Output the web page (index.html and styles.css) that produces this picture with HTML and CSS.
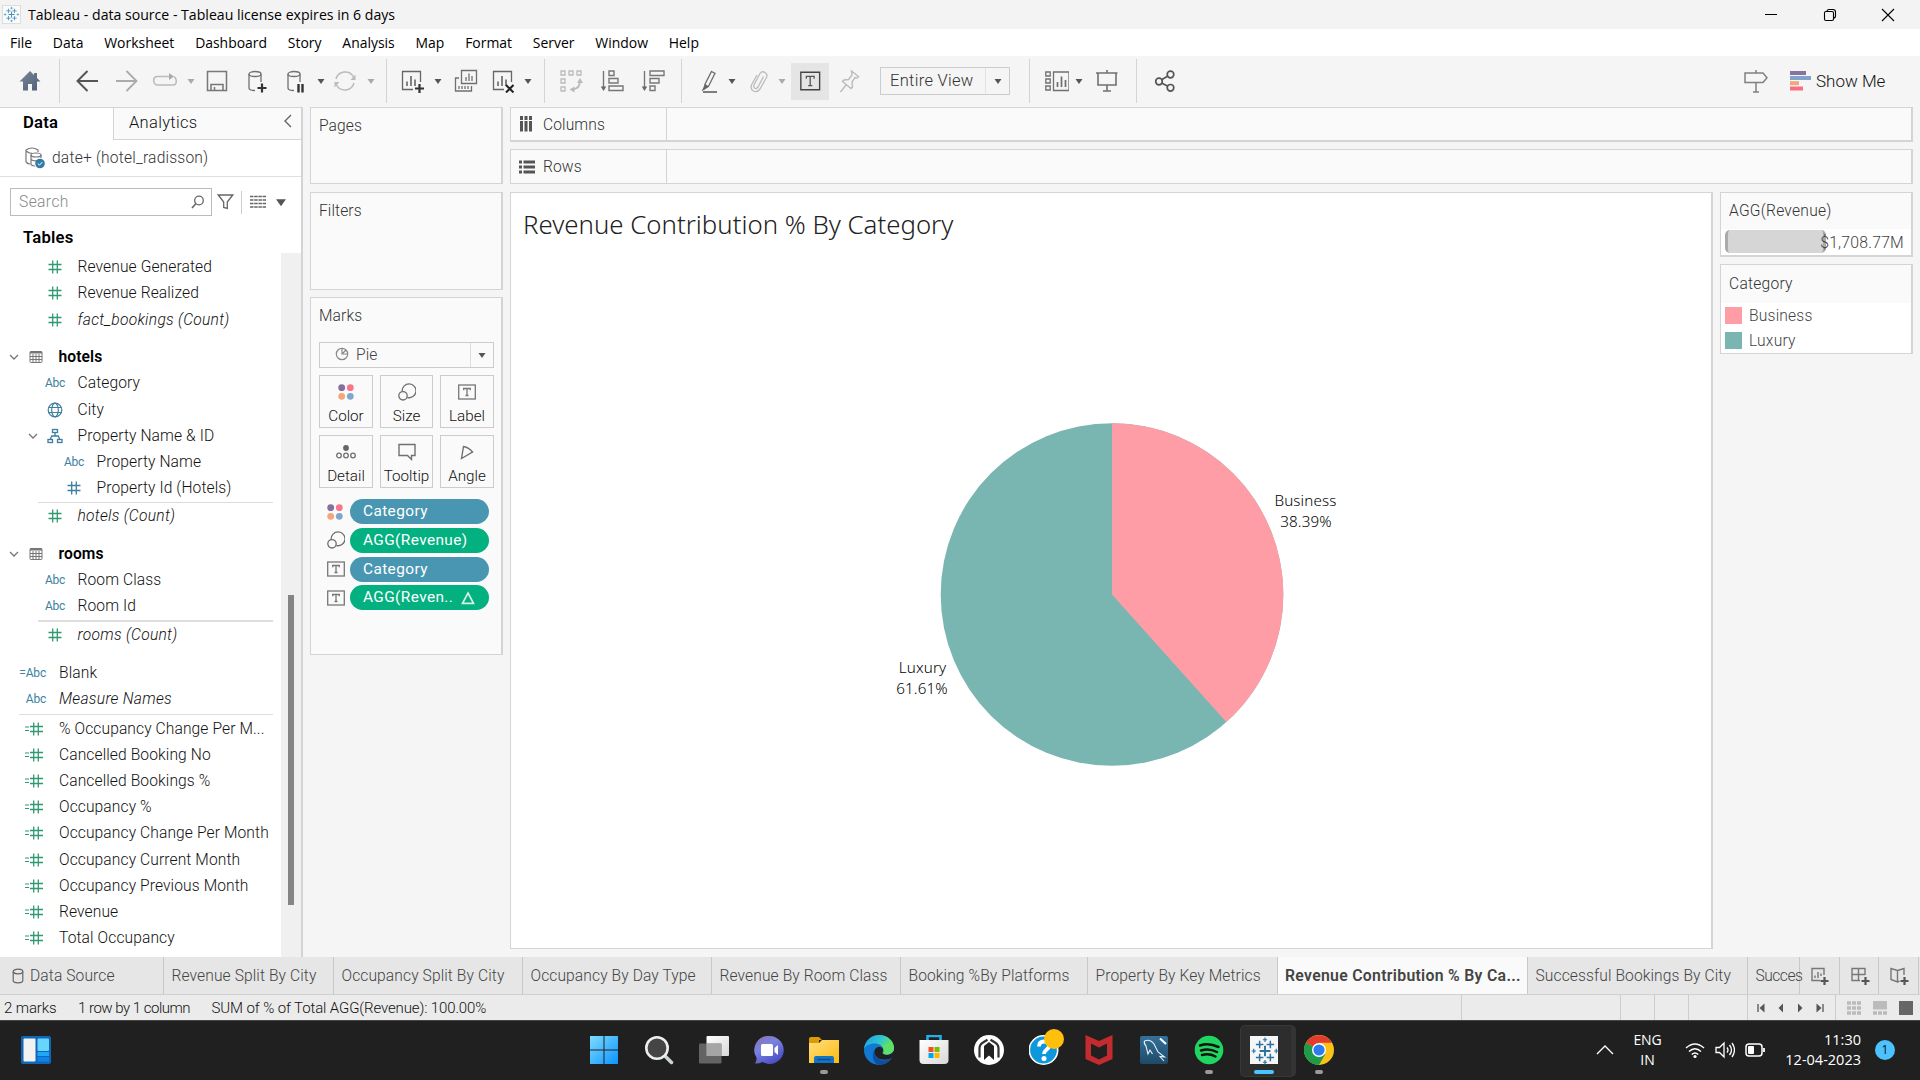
FILE: index.html
```html
<!DOCTYPE html>
<html lang="en">
<head>
<meta charset="utf-8">
<title>Tableau - data source</title>
<link rel="stylesheet" href="styles.css">
</head>
<body>
<svg class="defs" width="0" height="0">
  <defs>
    <linearGradient id="gw" x1="0" y1="0" x2="1" y2="1"><stop offset="0" stop-color="#7fdcff"/><stop offset="1" stop-color="#0a93ff"/></linearGradient>
    <linearGradient id="gf" x1="0" y1="0" x2="1" y2="1"><stop offset="0" stop-color="#ffe07a"/><stop offset="1" stop-color="#fdb913"/></linearGradient>
    <linearGradient id="gc" x1="0" y1="0" x2="0.6" y2="1"><stop offset="0" stop-color="#8a6fae"/><stop offset="0.45" stop-color="#7b83e0"/><stop offset="1" stop-color="#4b4fc4"/></linearGradient>
    <linearGradient id="ge" x1="0" y1="0" x2="1" y2="0.4"><stop offset="0" stop-color="#1f9be0"/><stop offset="0.55" stop-color="#2fc4d4"/><stop offset="1" stop-color="#66eb4e"/></linearGradient>
    <linearGradient id="gh" x1="0" y1="0" x2="1" y2="1"><stop offset="0" stop-color="#7a8797"/><stop offset="1" stop-color="#4f5f78"/></linearGradient>
    <linearGradient id="gm" x1="0" y1="0" x2="0" y2="1"><stop offset="0" stop-color="#34719b"/><stop offset="1" stop-color="#1f4a68"/></linearGradient>
    <linearGradient id="gt" x1="0" y1="0" x2="1" y2="1"><stop offset="0" stop-color="#ffffff"/><stop offset="1" stop-color="#d8d8d8"/></linearGradient>
    <symbol id="caret" viewBox="0 0 10 10"><path d="M1.500 3h7L5 8z" fill="currentColor"/></symbol>
    <symbol id="cross" viewBox="0 0 28 28">
      <path d="M14 9v10M9 14h10" stroke-width="1.8"/>
      <path d="M9 4.500v7M5.500 8h7M19 4.500v7M15.500 8h7M9 16.500v7M5.500 20h7M19 16.500v7M15.500 20h7" stroke-width="1.400"/>
      <path d="M14 1.500v4M12 3.500h4M14 22.500v4M12 24.500h4M3.500 12v4M1.500 14h4M24.500 12v4M22.500 14h4" stroke-width="1.100"/>
    </symbol>
    <symbol id="hash" viewBox="0 0 14 14"><path d="M4.700 .5v13M9.300 .5v13M.5 4.500h13M.5 9.500h13" fill="none" stroke="currentColor" stroke-width="1.300"/></symbol>
    <symbol id="eqhash" viewBox="0 0 18 14"><path d="M8.700 .5v13M13.300 .5v13M5 4.500h13M5 9.500h13" fill="none" stroke="currentColor" stroke-width="1.300"/><path d="M0 5h4M0 8.500h4" stroke="currentColor" stroke-width="1.200"/></symbol>
    <symbol id="globe" viewBox="0 0 16 16"><g fill="none" stroke="currentColor" stroke-width="1.200"><circle cx="8" cy="8" r="6.800"/><ellipse cx="8" cy="8" rx="3.300" ry="6.800"/><path d="M1.800 5.500h12.400M1.800 10.500h12.400"/></g></symbol>
    <symbol id="hier" viewBox="0 0 16 16"><g fill="none" stroke="currentColor" stroke-width="1.300"><rect x="5.500" y="1.500" width="5" height="3"/><rect x="1" y="11.500" width="4.500" height="3"/><rect x="10.500" y="11.500" width="4.500" height="3"/><path d="M8 4.500v3.500M3.200 11.500l1.500-3.500h6.600l1.500 3.500"/></g></symbol>
    <symbol id="table" viewBox="0 0 14 14"><g fill="none" stroke="#777" stroke-width="1"><rect x="1" y="1.500" width="12" height="11" rx="1"/><path d="M1 2.500h12" stroke-width="2"/><path d="M4 4v8.500M7 4v8.500M10 4v8.500M1 6.500h12M1 9.500h12"/></g></symbol>
    <symbol id="chev" viewBox="0 0 10 10"><path d="M1 3l4 4 4-4" fill="none" stroke="#777" stroke-width="1.300"/></symbol>
    <symbol id="dots" viewBox="0 0 16 16"><circle cx="3.700" cy="3.700" r="3.400" fill="#876f9c"/><circle cx="12.300" cy="3.700" r="3.400" fill="#f9768a"/><circle cx="3.700" cy="12.300" r="3.400" fill="#f4a678"/><circle cx="12.300" cy="12.300" r="3.400" fill="#82a5cd"/></symbol>
    <symbol id="size" viewBox="0 0 18 18"><g fill="none" stroke="#707070" stroke-width="1.300"><path d="M4.200 8.500A6.900 6.900 0 1 1 9.300 14.500"/><circle cx="5" cy="12.800" r="4.200"/></g></symbol>
    <symbol id="label" viewBox="0 0 18 16"><rect x=".7" y="1" width="16.600" height="14" fill="none" stroke="#777" stroke-width="1.300"/><path d="M5.700 6.300V4.500h6.600v1.800M9 4.500v7M7.500 11.500h3" fill="none" stroke="#777" stroke-width="1.300"/></symbol>
    <symbol id="db" viewBox="0 0 24 24"><g fill="none" stroke="#707070" stroke-width="1.300"><ellipse cx="10" cy="5" rx="6" ry="2.500"/><path d="M4 5v14c0 1.500 2.500 2.500 6 2.500M16 5v8"/></g></symbol>
    <symbol id="chart" viewBox="0 0 24 24"><g fill="none" stroke="#666" stroke-width="1.300"><path d="M13 20.500H2.500v-18h18V13"/><path d="M7 17v-4.500M11 17V7M15 17V10.500" stroke-width="1.600"/></g></symbol>
  </defs>
</svg>

<header class="titlebar">
  <svg class="app" viewBox="0 0 20 20"><rect x=".5" y=".5" width="18" height="18" fill="#f8fafb" stroke="#ddd"/><svg x="1" y="1" width="17" height="17" stroke="#4a90b8" fill="none"><use href="#cross"/></svg></svg>
  <span class="app-title">Tableau - data source - Tableau license expires in 6 days</span>
  <svg class="wc" viewBox="0 0 14 14"><path d="M1 6.500h12" stroke="#000"/></svg>
  <svg class="wc" viewBox="0 0 14 14"><g fill="none" stroke="#000" stroke-width="1.100"><rect x="1.500" y="3.500" width="9" height="9" rx="1.500"/><path d="M4 3.500C4 2 5 1.500 6 1.500h4C12 1.500 12.500 2.500 12.500 4v4c0 1-.5 2-2 2"/></g></svg>
  <svg class="wc" viewBox="0 0 14 14"><path d="M1 1l12 12M13 1L1 13" stroke="#000" stroke-width="1.100"/></svg>
</header>

<nav class="menubar"><span>File</span><span>Data</span><span>Worksheet</span><span>Dashboard</span><span>Story</span><span>Analysis</span><span>Map</span><span>Format</span><span>Server</span><span>Window</span><span>Help</span></nav>

<div class="toolbar">
  <svg class="ic g18" viewBox="0 0 24 24"><path d="M12 2L1.500 12.500H5V21.500h5v-6.500h4v6.500h5v-9h3.500L19 9V4h-3v2z" fill="url(#gh)"/></svg>
  <i class="sep g17"></i>
  <svg class="ic g15" viewBox="0 0 24 24"><path d="M23 12H3M12.500 2L2.500 12l10 10" fill="none" stroke="#555" stroke-width="2"/></svg>
  <svg class="ic g16" viewBox="0 0 24 24"><path d="M1 12h20M11.500 2l10 10-10 10" fill="none" stroke="#aaa" stroke-width="1.800"/></svg>
  <svg class="ic g14" viewBox="0 0 24 24"><path d="M17 7.500H3.500Q.7 8 .7 11.500t2.800 4.500h17Q23.500 15.500 23.300 12t-2.300-4.300" fill="none" stroke="#bbb" stroke-width="1.500"/><path d="M16 4l5 3.500-5 3.500z" fill="#aaa"/></svg>
  <svg class="car off g9"><use href="#caret"/></svg>
  <svg class="ic g9" viewBox="0 0 24 24"><path d="M2.500 2.500h19v19h-19zM6 21.500v-6h12v6M9.500 18v3.500" fill="none" stroke="#777" stroke-width="1.500"/></svg>
  <svg class="ic g16" viewBox="0 0 24 24"><use href="#db"/><path d="M17 14.500v9M12.500 19h9" stroke="#333" stroke-width="2.200"/></svg>
  <svg class="ic g15" viewBox="0 0 24 24"><use href="#db"/><path d="M14.500 15v8.500M18.500 15v8.500" stroke="#333" stroke-width="2.400"/></svg>
  <svg class="car g8"><use href="#caret"/></svg>
  <svg class="ic g7" viewBox="0 0 24 24"><path d="M3 10A9.500 9.500 0 0 1 20.500 8M21 14A9.500 9.500 0 0 1 3.500 16" fill="none" stroke="#bbb" stroke-width="1.500"/><path d="M22.500 5.500v5.500h-5zM1.500 18.500V13h5z" fill="#bbb"/></svg>
  <svg class="car off g9"><use href="#caret"/></svg>
  <i class="sep g10"></i>
  <svg class="ic g13" viewBox="0 0 24 24"><use href="#chart"/><path d="M19.500 15v9M15 19.500h9" stroke="#333" stroke-width="2.200"/></svg>
  <svg class="car g9"><use href="#caret"/></svg>
  <svg class="ic g11" viewBox="0 0 24 24"><g fill="none" stroke="#707070" stroke-width="1.300"><path d="M7.500 1.500h15v13h-15zM17.500 17v5h-16V9H5"/><path d="M12 12V8M15 12V4.500M18 12V7M5 20v-3M8 20v-3M11 20v-3M14 20v-3"/></g></svg>
  <svg class="ic g13" viewBox="0 0 24 24"><use href="#chart"/><path d="M15 16l7.500 7.500M22.500 16L15 23.500" stroke="#222" stroke-width="2"/></svg>
  <svg class="car g8"><use href="#caret"/></svg>
  <i class="sep g11"></i>
  <svg class="ic g14" viewBox="0 0 24 24"><g fill="none" stroke="#bbb" stroke-width="1.300"><path d="M2 2h4v4H2zM10 2h4v4h-4zM18 2h4v4h-4zM2 10h4v4H2zM2 18h4v4H2z"/><path d="M21 12q0 8-8 8.500" stroke-width="1.800"/></g><path d="M21 9l3 5h-6zM10.500 20.500l5-3v6z" fill="#bbb"/></svg>
  <svg class="ic g17" viewBox="0 0 24 24"><g fill="none" stroke="#777" stroke-width="1.400"><path d="M3.500 2v17M9 2h5v4.500H9zM9 9.500h9V14H9zM9 17h14v4.500H9z"/></g><path d="M.8 17.500h5.400L3.500 22z" fill="#666"/></svg>
  <svg class="ic g17" viewBox="0 0 24 24"><g fill="none" stroke="#777" stroke-width="1.400"><path d="M3.500 2v17M9 2h14v4.500H9zM9 9.500h9V14H9zM9 17h5v4.500H9z"/></g><path d="M.8 17.500h5.400L3.500 22z" fill="#666"/></svg>
  <i class="sep g16"></i>
  <svg class="ic g16" viewBox="0 0 24 24"><g fill="none" stroke="#707070" stroke-width="1.300"><path d="M13.500 2.500l3.500 1.800-6.500 13-4 2.500.5-4.500z"/><path d="M5 23h14" stroke-width="1.800"/></g><path d="M7 15l4 2.500-7.500 5z" fill="#666"/></svg>
  <svg class="car g5"><use href="#caret"/></svg>
  <svg class="ic g10" viewBox="0 0 24 24"><path d="M16.500 7.500L11 18q-2 2.500-3.500 1T7.500 15L13 4.500q2-3 5-1t1.500 5L13 20q-3 4-6.500 2T4.500 16L10 6" fill="none" stroke="#bbb" stroke-width="1.300"/></svg>
  <svg class="car off g6"><use href="#caret"/></svg>
  <span class="tbtn g4"><svg viewBox="0 0 24 24"><path d="M2 2.500h20.500v19H2z" fill="none" stroke="#444" stroke-width="1.500"/><path d="M8 9.500V7h8.500v2.500M12.200 7v10M10 17h4.500" fill="none" stroke="#555" stroke-width="1.400"/></svg></span>
  <svg class="ic g9" viewBox="0 0 24 24"><path d="M13.500 2l7 5.500-1.500 1.500-2-.5-3 4.500.5 5-1.500 1.500-8.500-7L6 11l4.500-.5L14 6zM8 16l-5.500 7" fill="none" stroke="#bbb" stroke-width="1.400"/></svg>
  <span class="fit g18"><span>Entire View</span><b><svg class="car"><use href="#caret"/></svg></b></span>
  <i class="sep g19"></i>
  <svg class="ic g15" viewBox="0 0 24 24"><g fill="none" stroke="#707070" stroke-width="1.300"><path d="M.8 3h4.400v4H.8zM.8 10h4.400v4H.8zM.8 17h4.400v4H.8zM8.500 3H24v18.500H8.500z"/><path d="M12.500 18v-5M16.500 18V7.500M20.500 18v-7" stroke-width="1.700"/></g></svg>
  <svg class="car g5"><use href="#caret"/></svg>
  <svg class="ic g11" viewBox="0 0 24 24"><path d="M1 4h21.500M3 4v12h18V4M12 1v3M12 16v6M8 22h8" fill="none" stroke="#707070" stroke-width="1.600"/></svg>
  <i class="sep g17"></i>
  <svg class="ic g16" viewBox="0 0 24 24"><g fill="none" stroke="#555" stroke-width="1.700"><circle cx="6" cy="12.500" r="3.300"/><circle cx="17.500" cy="5.500" r="3.300"/><circle cx="17.500" cy="18.800" r="3.300"/><path d="M9 10.500l5.500-3.200M9 14.300l5.500 2.700"/></g></svg>
  <svg class="ic push" viewBox="0 0 24 24"><path d="M1 4h18l4 4.700L19 13.500H1zM12 1v3M12 13.500V23M9 23h6" fill="none" stroke="#808080" stroke-width="1.500"/></svg>
  <svg class="showic g22" viewBox="0 0 21 20"><path d="M0 0h16v4H0z" fill="#8a72a0"/><path d="M0 5h21v4H0z" fill="#7fa3cc"/><path d="M0 10.200h9v4H0z" fill="#f2a67c"/><path d="M0 15.500h13v4H0z" fill="#f96f82"/></svg>
  <span class="showme">Show Me</span>
</div>

<main class="work">
  <aside class="side">
    <div class="stabs"><b>Data</b><div><span>Analytics</span><svg viewBox="0 0 10 14"><path d="M8 1L2 7l6 6" fill="none" stroke="#666" stroke-width="1.400"/></svg></div></div>
    <div class="dsrc"><svg viewBox="0 0 22 22"><g fill="none" stroke="#777" stroke-width="1.200"><path d="M2 15V3q6-4 12 0v2M2 4q4 3 6 2M2 15q2 2 4 2"/><ellipse cx="12" cy="8" rx="5" ry="2"/><path d="M7 8v9q0 1.500 4 2M17 8v3M7 12.500q3 2 6 1"/></g><circle cx="16" cy="16.500" r="4.800" fill="#2f7da6"/><path d="M13.800 16.500l1.700 1.600 2.800-3" fill="none" stroke="#fff"/></svg><span>date+ (hotel_radisson)</span></div>
    <div class="find">
      <div class="box"><span>Search</span><svg viewBox="0 0 14 14"><circle cx="8" cy="5.500" r="4.300" fill="none" stroke="#666" stroke-width="1.300"/><path d="M5 8.500L1 13" stroke="#666" stroke-width="1.600"/></svg></div>
      <svg class="fun" viewBox="0 0 16 16"><path d="M.8 1h14.400l-5.400 7v6.500l-3.600-1V8z" fill="none" stroke="#666" stroke-width="1.300"/></svg>
      <i></i>
      <svg class="lst" viewBox="0 0 16 14"><path d="M0 1.500h16M0 5h16M0 8.500h16M0 12h16" stroke="#666" stroke-width="1.700" stroke-dasharray="3.500 .7"/></svg>
      <svg class="lc"><use href="#caret"/></svg>
    </div>
    <h3>Tables</h3>
    <div class="treewrap">
      <div class="tree">
        <div class="r b m"><i><svg class="h"><use href="#hash"/></svg></i>Revenue Generated</div>
        <div class="r b m"><i><svg class="h"><use href="#hash"/></svg></i>Revenue Realized</div>
        <div class="r b m it"><i><svg class="h"><use href="#hash"/></svg></i>fact_bookings (Count)</div>
        <div class="r t"><svg class="cv"><use href="#chev"/></svg><i><svg class="h"><use href="#table"/></svg></i>hotels</div>
        <div class="r b d"><i>Abc</i>Category</div>
        <div class="r b d"><i><svg class="k"><use href="#globe"/></svg></i>City</div>
        <div class="r b d hy"><svg class="cv"><use href="#chev"/></svg><i><svg class="k"><use href="#hier"/></svg></i>Property Name &amp; ID</div>
        <div class="r c d"><i>Abc</i>Property Name</div>
        <div class="r c d"><i><svg class="h s"><use href="#hash"/></svg></i>Property Id (Hotels)</div>
        <hr class="in">
        <div class="r b m it"><i><svg class="h"><use href="#hash"/></svg></i>hotels (Count)</div>
        <div class="r t"><svg class="cv"><use href="#chev"/></svg><i><svg class="h"><use href="#table"/></svg></i>rooms</div>
        <div class="r b d"><i>Abc</i>Room Class</div>
        <div class="r b d"><i>Abc</i>Room Id</div>
        <hr class="in thick">
        <div class="r b m it"><i><svg class="h"><use href="#hash"/></svg></i>rooms (Count)</div>
        <div class="r a d first"><i>=Abc</i>Blank</div>
        <div class="r a d it"><i>Abc</i><span>Measure Names</span></div>
        <hr>
        <div class="r a m"><i><svg class="e"><use href="#eqhash"/></svg></i>% Occupancy Change Per M...</div>
        <div class="r a m"><i><svg class="e"><use href="#eqhash"/></svg></i>Cancelled Booking No</div>
        <div class="r a m"><i><svg class="e"><use href="#eqhash"/></svg></i>Cancelled Bookings %</div>
        <div class="r a m"><i><svg class="e"><use href="#eqhash"/></svg></i>Occupancy %</div>
        <div class="r a m"><i><svg class="e"><use href="#eqhash"/></svg></i>Occupancy Change Per Month</div>
        <div class="r a m"><i><svg class="e"><use href="#eqhash"/></svg></i>Occupancy Current Month</div>
        <div class="r a m"><i><svg class="e"><use href="#eqhash"/></svg></i>Occupancy Previous Month</div>
        <div class="r a m"><i><svg class="e"><use href="#eqhash"/></svg></i>Revenue</div>
        <div class="r a m"><i><svg class="e"><use href="#eqhash"/></svg></i>Total Occupancy</div>
      </div>
      <div class="track"><div class="thumb"></div></div>
    </div>
  </aside>

  <section class="cards">
    <div class="card pages">Pages</div>
    <div class="card filters">Filters</div>
    <div class="card marks">
      <span>Marks</span>
      <div class="mtype"><svg viewBox="0 0 14 14"><g fill="none" stroke="#888" stroke-width="1.200"><circle cx="7" cy="7" r="5.700"/><path d="M7 1.500V7h5.500M7 7l4-4"/></g></svg><span>Pie</span><b><svg class="car"><use href="#caret"/></svg></b></div>
      <div class="mgrid">
        <div><svg width="16" height="16"><use href="#dots"/></svg>Color</div>
        <div><svg width="18" height="18"><use href="#size"/></svg>Size</div>
        <div><svg width="18" height="16"><use href="#label"/></svg>Label</div>
        <div><svg width="20" height="16" viewBox="0 0 20 16"><circle cx="10" cy="4" r="2.900" fill="#666"/><g fill="none" stroke="#707070" stroke-width="1.300"><circle cx="3" cy="11.500" r="2.300"/><circle cx="10" cy="11.500" r="2.300"/><circle cx="17" cy="11.500" r="2.300"/></g></svg>Detail</div>
        <div><svg width="18" height="18" viewBox="0 0 18 18"><path d="M1 1.500h16v11h-3.500V16.500L9.500 12.500H1z" fill="none" stroke="#707070" stroke-width="1.400"/></svg>Tooltip</div>
        <div><svg width="16" height="16" viewBox="0 0 16 16"><path d="M4.500 2.500L2.500 14.500 13.500 8Q10 3.500 4.500 2.500z" fill="none" stroke="#707070" stroke-width="1.400"/></svg>Angle</div>
      </div>
      <div class="pills">
        <div><svg width="16" height="16"><use href="#dots"/></svg><b class="bl">Category</b></div>
        <div><svg width="18" height="18"><use href="#size"/></svg><b>AGG(Revenue)</b></div>
        <div><svg width="18" height="16"><use href="#label"/></svg><b class="bl">Category</b></div>
        <div><svg width="18" height="16"><use href="#label"/></svg><b>AGG(Reven..<svg class="tri" viewBox="0 0 14 14"><path d="M7 2L12.500 12.300h-11z" fill="none" stroke="#d5f2e6" stroke-width="1.700"/></svg></b></div>
      </div>
    </div>
  </section>

  <section class="main">
    <div class="shelf"><div><svg viewBox="0 0 14 16"><path d="M2.500 0v4M7 0v4M11.500 0v4M2.500 5v10.500M7 5v10.500M11.500 5v10.500" stroke="#555" stroke-width="3"/></svg><span>Columns</span></div></div>
    <div class="shelf s2"><div><svg viewBox="0 0 16 14"><path d="M0 2h3M0 7h3M0 12h3M4.500 2H16M4.500 7H16M4.500 12H16" stroke="#555" stroke-width="3"/></svg><span>Rows</span></div></div>
    <div class="lower">
      <div class="view">
        <h1>Revenue Contribution % By Category</h1>
        <svg class="pie" viewBox="0 0 1200 700">
          <circle cx="601" cy="346.500" r="171.300" fill="#79b6b1"/>
          <path d="M601 346.500V175.200A171.300 171.300 0 0 1 715.300 474.100z" fill="#ff9da7"/>
          <text x="794.500" y="257.500">Business</text><text x="795" y="278.500">38.39%</text>
          <text x="411.500" y="425">Luxury</text><text x="411" y="446">61.61%</text>
        </svg>
      </div>
      <div class="legends">
        <div class="leg"><h4>AGG(Revenue)</h4><div class="szrow"><i></i><span>$1,708.77M</span></div></div>
        <div class="leg l2"><h4>Category</h4><div class="sw"><i class="p"></i>Business</div><div class="sw"><i class="g"></i>Luxury</div></div>
      </div>
    </div>
  </section>
</main>

<div class="sheets">
  <div class="w1"><svg viewBox="0 0 12 16"><g fill="none" stroke="#666" stroke-width="1.200"><ellipse cx="6" cy="3.500" rx="4.800" ry="2.300"/><path d="M1.200 3.500v9q0 2.300 4.800 2.300t4.800-2.300v-9"/></g></svg>Data Source</div>
  <div class="w2">Revenue Split By City</div>
  <div class="w3">Occupancy Split By City</div>
  <div class="w4">Occupancy By Day Type</div>
  <div class="w5">Revenue By Room Class</div>
  <div class="w6">Booking %By Platforms</div>
  <div class="w7">Property By Key Metrics</div>
  <div class="w8 on">Revenue Contribution % By Ca...</div>
  <div class="w9">Successful Bookings By City</div>
  <div class="w10">Succes</div>
  <div class="nw"><svg viewBox="0 0 20 20"><path d="M10 14.500H2v-12h12V9M5 12V9.500M8 12V6M11 10V7.500" fill="none" stroke="#777" stroke-width="1.400"/><path d="M14.500 11v8M10.500 15h8" stroke="#555" stroke-width="2.200"/></svg></div>
  <div class="nw"><svg viewBox="0 0 20 20"><path d="M10 14.500H2v-12h13V9M8.500 2.500v12M2 8.500h13" fill="none" stroke="#777" stroke-width="1.400"/><path d="M15.500 11v8M11.500 15h8" stroke="#555" stroke-width="2.200"/></svg></div>
  <div class="nw"><svg viewBox="0 0 20 20"><path d="M8.500 4.500L2 2.500v11l6.500 2.500zM8.500 4.500l6.500-2V9M8.500 16l2-.8" fill="none" stroke="#777" stroke-width="1.400"/><path d="M15.500 11v8M11.500 15h8" stroke="#555" stroke-width="2.200"/></svg></div>
</div>

<div class="status">
  <span>2 marks</span><span class="rc">1 row by 1 column</span><span>SUM of % of Total AGG(Revenue): 100.00%</span>
  <div class="scells"><i class="c1"></i><i class="c2"></i><i class="c2"></i><i class="c3"></i>
    <i class="c4"><svg viewBox="0 0 10 10"><path d="M2 1v8" stroke="#555" stroke-width="1.300"/><path d="M8.500 .5v9L3.500 5z" fill="#555"/></svg><svg viewBox="0 0 10 10"><path d="M7 .5v9L2.500 5z" fill="#555"/></svg><svg viewBox="0 0 10 10"><path d="M3 .5v9L7.500 5z" fill="#555"/></svg><svg viewBox="0 0 10 10"><path d="M8 1v8" stroke="#555" stroke-width="1.300"/><path d="M1.500 .5v9L6.500 5z" fill="#555"/></svg></i>
    <i class="c5"><svg viewBox="0 0 14 14"><path d="M0 2h14M0 7h14M0 12h14" stroke="#bbb" stroke-width="3.700" stroke-dasharray="4 1"/></svg><svg viewBox="0 0 14 14"><path d="M0 0h14v8.500H0z" fill="#bbb"/><path d="M0 12h14" stroke="#bbb" stroke-width="3.700" stroke-dasharray="4 1"/></svg><svg viewBox="0 0 14 14"><path d="M0 0h14v14H0z" fill="#666"/></svg></i>
  </div>
</div>

<footer class="taskbar">
  <svg class="widget" viewBox="0 0 30 28"><rect width="30" height="28" rx="2" fill="#1266b5"/><rect x="2.500" y="2.500" width="12" height="23" rx="1" fill="#f2f2f2"/><rect x="16.500" y="2.500" width="11.500" height="12.500" rx="1" fill="#66d6ff"/><rect x="16.500" y="16" width="11.500" height="4" fill="#20a8f6"/><rect x="16.500" y="21" width="11.500" height="4.500" fill="#0c84ea"/></svg>
  <div class="apps">
    <div><svg viewBox="0 0 30 30"><path d="M1 1h13.500v13.500H1zM15.500 1H29v13.500H15.500zM1 15.500h13.500V29H1zM15.500 15.500H29V29H15.500z" fill="url(#gw)"/></svg></div>
    <div><svg viewBox="0 0 30 30"><path d="M20 20l7.500 7.500" stroke="#cfd3d6" stroke-width="3.500" stroke-linecap="round"/><circle cx="13" cy="13" r="10.700" fill="#454545" stroke="#eceff0" stroke-width="2.600"/></svg></div>
    <div><svg viewBox="0 0 30 30"><rect x="7.500" y="1" width="22.500" height="20" rx="1" fill="url(#gt)"/><rect x="0" y="8.500" width="22.500" height="20" rx="1" fill="#707070" opacity=".85"/><path d="M7.500 8.500h15V21h-15z" fill="#a5a5a5"/></svg></div>
    <div><svg viewBox="0 0 30 30"><path d="M15.500 1a14 14 0 1 1-7 26q-4 2-7.500 1.500 2-3 1.500-6A14 14 0 0 1 15.500 1z" fill="url(#gc)"/><rect x="7" y="9" width="12" height="12" rx="1.500" fill="#fff"/><path d="M20.500 13l3.500-3v10l-3.500-3z" fill="#fff"/></svg></div>
    <div class="run"><svg viewBox="0 0 30 30"><path d="M0 4q0-2 2-2h8l3 3h-3v6H0z" fill="#dd9a06"/><path d="M0 8h10l3-3h17v23H0z" fill="url(#gf)"/><path d="M5 28v-5q0-2 2-2h16q2 0 2 2v5z" fill="#1372c4"/><path d="M8.500 24.500h13" stroke="#0a4c8c" stroke-width="1.300"/></svg></div>
    <div><svg viewBox="0 0 30 30"><circle cx="15" cy="15" r="15" fill="#1179d3"/><path d="M0 14C1 5 8 0 15 0c9 0 15 6 15 13 0 6-8 8-11 5.500 2-2 1-8-5-9.500S2 10 0 14z" fill="url(#ge)"/><path d="M11.500 14c-2 9 7 15 16 9-3 5-8 7-12.500 7C8 28 7 18 11.500 14z" fill="#0d4f9e"/><path d="M30.500 13c0 6.500-8 8.500-11.500 5.500-1.500-1.200.5-1.500 0-4-1-3.500-6-4-8 0-1 3 0 6 3 8.500 4 2.500 10 2 13.500 0l3-3z" fill="#202020"/><path d="M30 13c0 6-8 8-11 5.500 1.500-1.500.8-7-2-8.500L29 9z" fill="#5fdf67"/></svg></div>
    <div><svg viewBox="0 0 30 30"><path d="M8.500 7V1h13v6" fill="none" stroke="#1fb0ee" stroke-width="2.600"/><path d="M.5 5h29v20q0 4-4 4h-21q-4 0-4-4z" fill="url(#gt)"/><path d="M9.500 12h5v5h-5z" fill="#f25022"/><path d="M15.500 12h5v5h-5z" fill="#7fba00"/><path d="M9.500 18h5v5h-5z" fill="#00a4ef"/><path d="M15.500 18h5v5h-5z" fill="#ffb900"/></svg></div>
    <div><svg viewBox="0 0 30 30"><circle cx="15" cy="15" r="15" fill="#fff"/><path d="M10 25V11l5-4 5 4v14l-5-4.500z" fill="#222"/><path d="M5.500 22.500v-9q0-4 3.500-6l4.500-2.800M24.500 22.500v-9q0-4-3.500-6l-4.500-2.800" stroke="#333" stroke-width="2.200" fill="none"/></svg></div>
    <div><svg viewBox="0 0 30 30"><circle cx="14.500" cy="15" r="14.200" fill="#0d98dc" stroke="#fff" stroke-width="1.600"/><path d="M10 11.500q0-5 5-5t5 4.500c0 3.500-5 3.500-5 8" fill="none" stroke="#fff" stroke-width="3.800"/><circle cx="15" cy="23.500" r="2.500" fill="#fff"/></svg><u></u></div>
    <div><svg viewBox="0 0 30 30"><path d="M1.500 0L15 6 28.500 0v24L15 30 1.500 24z" fill="#c42b2f"/><path d="M7 8.500l8 4 8-4V20.500l-8 4-8-4z" fill="#202020"/></svg></div>
    <div><svg viewBox="0 0 30 30"><rect x="1" y="1" width="28" height="28" rx="2" fill="url(#gm)"/><path d="M5.500 6q5.500-2.500 9.500 3l4 8 6.500 5-4.500-.5 4 4.500M5.500 6q-1 2.500 1.500 5l2 8 2-4 2.500 4" fill="none" stroke="#e8f2f8" stroke-width="1.100"/><path d="M21 3.500l6 5.500" stroke="#fff" stroke-width="2"/></svg></div>
    <div class="run"><svg viewBox="0 0 30 30"><circle cx="15" cy="15" r="14.300" fill="#1fd760"/><path d="M6 10.500q9-3 18.500 1.500M7 15.500q8-2.500 16 1.500M8 20q7-2 13.500 1.500" fill="none" stroke="#111" stroke-width="2.500" stroke-linecap="round"/></svg></div>
    <div class="act"><svg viewBox="0 0 30 30"><rect x="1" y="1" width="28" height="28" fill="#f5f6f7"/><svg x="1" y="1" width="28" height="28" stroke="#2d6f9e" fill="none"><use href="#cross"/></svg></svg></div>
    <div class="run"><svg viewBox="0 0 30 30"><circle cx="15" cy="15" r="15" fill="#fbc116"/><path d="M15 15L2 7.500A15 15 0 0 0 15 30l6.500-11.300z" fill="#1f9a4b"/><path d="M15 15L2 7.500A15 15 0 0 1 28 7.800H15z" fill="#e33b2e"/><circle cx="15" cy="15" r="7" fill="#fff"/><circle cx="15" cy="15" r="5.600" fill="#2b7cf0"/></svg></div>
  </div>
  <div class="tray">
    <svg class="up" viewBox="0 0 18 12"><path d="M1 10l8-8 8 8" fill="none" stroke="#fff" stroke-width="1.300"/></svg>
    <span class="lang">ENG<br>IN</span>
    <svg class="ti wf" viewBox="0 0 20 20"><g fill="none" stroke="#fff" stroke-width="1.500"><path d="M1 8q9-8 18 0M4 11.500q6-5.500 12 0M6.800 14.500q3.200-3 6.400 0"/></g><circle cx="10" cy="16.500" r="1.600" fill="#fff"/></svg>
    <svg class="ti vl" viewBox="0 0 20 20"><g fill="none" stroke="#fff" stroke-width="1.300"><path d="M1 7.500h3.500L9 3v14l-4.500-4.500H1zM12 7.500q2 2.500 0 5M14.500 5q4 5 0 10M17 3q5 7 0 14"/></g></svg>
    <svg class="ti bt" viewBox="0 0 20 20"><rect x="1" y="4" width="16" height="12" rx="3" fill="none" stroke="#fff" stroke-width="1.500"/><rect x="3" y="6" width="6" height="8" rx="1" fill="#fff"/><path d="M19 8v4" stroke="#fff" stroke-width="1.800"/></svg>
    <span class="clock">11:30<br>12-04-2023</span>
    <span class="badge">1</span>
  </div>
</footer>
</body>
</html>
```
FILE: styles.css
```css
*{box-sizing:border-box}
body{margin:0;width:1920px;height:1080px;overflow:hidden;display:flex;flex-direction:column;background:#f5f5f5;font:300 15.600px/20px Roboto,"Liberation Sans",sans-serif;color:#111;white-space:nowrap}
svg{display:block;flex:none}
i{font-style:normal}
.defs{position:absolute}

.titlebar{height:29px;flex:none;background:#f3f3f3;display:flex;align-items:center;font:400 14.100px/20px "Open Sans","Noto Sans",sans-serif;color:#000;padding:0 25px 0 2px}
.app{width:20px;height:20px;margin-right:6px}
.app-title{flex:1}
.wc{width:14px;height:14px;margin-left:44.500px}

.menubar{height:27px;flex:none;background:#fff;display:flex;align-items:center;gap:20.800px;padding-left:10px;font:400 13.950px/20px "Open Sans","Noto Sans",sans-serif;color:#000}

.toolbar{height:51px;flex:none;display:flex;align-items:center;padding:0 36px 1px 0}
.ic{width:24px;height:24px}
.car{width:10px;height:10px;color:#555}
.off{color:#aaa}
.sep{width:1px;height:44px;background:#d4d4d4}
.g4{margin-left:4px}.g5{margin-left:5px}.g6{margin-left:6px}.g7{margin-left:7px}.g8{margin-left:8px}.g9{margin-left:9px}
.g10{margin-left:10px}.g11{margin-left:11px}.g13{margin-left:13px}.g14{margin-left:14px}.g15{margin-left:15px}
.g16{margin-left:16px}.g17{margin-left:17px}.g18{margin-left:18px}.g19{margin-left:19px}.g22{margin-left:22px}
.push{margin-left:auto}
.tbtn{width:38px;height:37px;background:#e5e5e5;display:flex;align-items:center;justify-content:center}
.tbtn svg{width:24px;height:22px}
.fit{width:130px;height:28px;border:1px solid #ccc;display:flex;align-items:center;justify-content:space-between;padding-left:9px;font-size:16.500px;letter-spacing:.3px;color:#333}
.fit b{width:24px;height:26px;border-left:1px solid #e2e2e2;display:flex;align-items:center;justify-content:center}
.showic{width:21px;height:20px}
.showme{margin-left:5px;width:68px;font-size:17px;font-weight:300;color:#111}

.work{height:850px;flex:none;display:flex}
.side{width:303px;background:#fff;border-right:2px solid #d4d4d4;border-top:1px solid #d4d4d4;display:flex;flex-direction:column}
.stabs{height:32px;flex:none;display:flex}
.stabs b{width:113px;padding:5px 0 0 23px;font-size:16.700px;font-weight:600;letter-spacing:.2px;color:#000}
.stabs div{flex:1;display:flex;justify-content:space-between;border-left:1px solid #d4d4d4;border-bottom:1px solid #d4d4d4;background:#fafafa;padding:5px 8px 0 15px;font-size:16.500px;letter-spacing:.3px}
.stabs div svg{width:10px;height:14px;margin-top:1px}
.dsrc{height:37px;flex:none;display:flex;align-items:center;border-bottom:1px solid #e0e0e0;padding:0 0 1px 24px;gap:6px;color:#333;letter-spacing:.2px}
.dsrc svg{width:22px;height:22px}
.find{height:51px;flex:none;display:flex;align-items:center;padding:0 0 1px 10px}
.box{width:202px;height:28px;border:1px solid #bbb;display:flex;align-items:center;justify-content:space-between;padding:0 6px 0 8px;color:#888;letter-spacing:.4px}
.box svg{width:14px;height:14px}
.fun{width:17px;height:16px;margin-left:5px}
.find i{width:1px;height:23px;background:#ccc;margin-left:7px}
.lst{width:16px;height:14px;margin-left:8px}
.lc{width:14px;height:14px;margin-left:8px;color:#555}
.side h3{margin:0;height:25px;flex:none;padding-left:23px;font-size:16.700px;line-height:20px;font-weight:600;letter-spacing:.2px;color:#000}
.treewrap{flex:1;display:flex;min-height:0}
.tree{flex:1;padding-top:1.200px}
.r{height:26.200px;display:flex;align-items:center;letter-spacing:.1px;color:#111}
.r>i{width:26px;display:flex;justify-content:center;font:400 12px/20px Roboto,sans-serif;color:#3c7f9f;letter-spacing:-.2px;margin-right:9.500px}
.m>i{color:#2f9a72}
.a{padding-left:23px}
.a.d>i{justify-content:flex-end;width:23px;margin-right:13px}
.a.m>i{justify-content:flex-end;width:20px;margin-right:16px}
.b{padding-left:42px}
.c{padding-left:61px}
.it{font-style:italic;letter-spacing:.28px}
.it>i{font-style:normal}
.h,.e,.k{height:14px;width:14px}.e{width:18px}.k{width:16px;height:16px}
.cv{width:10px;height:10px}
.t{padding-left:9px;font-weight:600;color:#000;letter-spacing:.1px;margin-top:11.300px}
.t>i{margin-left:4px}
.hy{padding-left:28px}
.hy>i{margin-left:4px}
.first{margin-top:11.800px}
.tree hr{border:0;height:1px;background:#ddd;margin:1px 8px 1px 19px}
.tree hr.in{margin-left:38px;margin-bottom:0}
.tree hr.thick{height:2px}
.track{width:20px;background:#f0f0f0;padding:342px 0 0 7px}
.thumb{width:6px;height:310px;background:#858585}

.cards{width:193px;margin-left:7px;display:flex;flex-direction:column;gap:8px;color:#333;letter-spacing:.1px}
.card{background:#fafafa;border:1px solid #d4d4d4;border-right-width:2px;padding:8px 7px 0 8px}
.pages{height:77px}
.filters{height:98px}
.marks{height:358px;margin-top:-1px}
.mtype{margin-top:16px;height:26px;border:1px solid #ccc;display:flex;align-items:center;padding-left:15px;color:#444}
.mtype span{margin-left:7px;flex:1}
.mtype>svg{width:14px;height:14px;margin-top:-2px}
.mtype b{width:23px;height:24px;border-left:1px solid #ddd;display:flex;align-items:center;justify-content:center}
.mgrid{margin-top:7px;display:grid;grid-template-columns:54px 53px 54px;grid-auto-rows:53px;row-gap:7px;justify-content:space-between}
.mgrid div{border:1px solid #ccc;display:grid;grid-template-rows:32px 17px;justify-items:center;align-items:center;font-size:15.200px;line-height:17px;letter-spacing:0;color:#111}
.pills{margin-top:11px;display:flex;flex-direction:column;gap:3.800px}
.pills div{height:25px;display:flex;align-items:center;justify-content:space-between;padding:0 5px 0 8px}
.pills b{width:139px;height:25px;border-radius:13px;background:#03b07f;color:#fff;font:400 15.400px/25px Roboto,sans-serif;letter-spacing:.4px;padding-left:13px;display:flex;align-items:center}
.pills .bl{background:#4996b2}
.tri{width:14px;height:14px;margin-left:8px}

.main{width:1403px;margin-left:7px;display:flex;flex-direction:column}
.shelf{height:35px;flex:none;background:#fafafa;border:1px solid #d4d4d4;border-right-width:2px;border-bottom-width:2px}
.shelf div{width:156px;height:32px;border-right:1px solid #d4d4d4;display:flex;align-items:center;padding-left:8px;gap:10px;color:#333;letter-spacing:.1px}
.shelf svg{width:14px;height:16px}
.shelf span{padding-top:2px}
.s2{margin-top:7px;border-bottom-width:1px}
.s2 svg{width:16px;height:14px}
.s2 div{gap:8px;height:33px}
.s2 span{padding-top:1px}
.lower{margin-top:8px;display:flex;gap:7px}
.view{width:1203px;height:757px;background:#fff;border:1px solid #d4d4d4;border-right-width:2px;display:flex;flex-direction:column}
.view h1{margin:0;height:55px;padding:14px 0 0 12px;font:300 25.800px/34px "Noto Sans","Open Sans",sans-serif;color:#222}
.pie{width:1200px;height:700px}
.pie text{font:300 15.200px "Noto Sans","Open Sans",sans-serif;text-anchor:middle;fill:#000;letter-spacing:.15px}
.legends{width:193px;display:flex;flex-direction:column;gap:7px;color:#444}
.leg{height:65px;background:#fff;border:1px solid #d4d4d4;border-right-width:2px;border-bottom-width:2px}
.leg h4{margin:0;height:36px;background:#fafafa;font:300 15.600px/37px Roboto,sans-serif;letter-spacing:.25px;padding-left:8px;color:#333}
.szrow{display:flex;height:26px;align-items:center;padding:0 7px 0 4px}
.szrow i{width:102px;height:23px;background:#d6d6d6;border:solid #aaa;border-width:0 3px;border-radius:5px;margin-top:-2px}
.szrow span{margin-left:-8px;font-size:15.800px;line-height:20px;letter-spacing:.2px;width:86px;text-align:right;padding-top:2px}
.l2{height:90px;border-bottom-width:1px}
.l2 h4{height:38px;line-height:38px}
.sw{height:25px;display:flex;align-items:center;gap:7px;padding-left:4px;letter-spacing:.2px}
.sw i{width:17px;height:17px;background:#ff9da7}
.sw .g{background:#79b6b1}

.sheets{height:38px;flex:none;display:flex;background:#e6e6e6;border-bottom:1px solid #d0d0d0;color:#444;letter-spacing:.1px}
.sheets>div{border-right:1px solid #c8c8c8;padding-left:7.500px;display:flex;align-items:center;flex:none}
.sheets .w1{width:164px;padding-left:12px;gap:6px}.w1 svg{width:12px;height:16px}
.w2{width:170px}.w3{width:189px}.w4{width:189px}.w5{width:189px}.w6{width:187px}.w7{width:190px}.w8{width:250px}.w9{width:220px}.w10{width:52px}
.sheets .w8{padding-left:7px}
.sheets>.w10{letter-spacing:-.5px}
.on{background:#fafafa;font-weight:600;font-size:15.800px;letter-spacing:.3px;color:#444}
.sheets>.nw{width:39.700px;padding:0 0 0 10px}
.nw svg{width:20px;height:20px}
.status{height:25px;flex:none;background:#ebebeb;display:flex;align-items:center;padding-left:4px;gap:21.500px;font-size:15px;letter-spacing:-.12px;color:#111}
.rc{letter-spacing:-.5px}
.scells{margin-left:auto;display:flex;height:25px}
.scells>i{border-left:1px solid #cdcdcd;height:25px;display:flex;align-items:center}
.c1{width:159px}.c2{width:34px}.c3{width:59px}
.c4{width:88px;padding-left:8px;gap:9.700px}.c4 svg{width:10px;height:10px}
.c5{width:85px;padding-left:11px;gap:12px}.c5 svg{width:14px;height:14px}

.taskbar{height:60px;flex:none;background:#202020;border-top:1px solid #454545;display:flex;align-items:center;color:#fff;padding-bottom:1px}
.widget{width:30px;height:28px;margin-left:21px}
.apps{display:flex;gap:25px;margin-left:537.500px}
.apps>div{width:30px;height:30px;position:relative}
.apps svg{width:30px;height:30px}
.apps u{position:absolute;right:-5px;top:-6px;width:20px;height:20px;border-radius:50%;background:#ffbf0d}
.run::after{content:"";position:absolute;left:11px;top:35px;width:8px;height:4px;border-radius:2px;background:#9a9a9a}
.apps .act::before{content:"";position:absolute;left:-9px;top:-10px;width:50px;height:50px;border-radius:5px;background:#2d2d2d;border:1px solid #383838;border-right:5px solid #343434}
.act svg{position:relative}
.act::after{content:"";position:absolute;left:5px;top:35px;width:20px;height:4px;border-radius:2px;background:#4cc2ff}
.tray{margin-left:auto;display:flex;align-items:center;padding-right:25px;font:400 14px/20px "Open Sans","Noto Sans",sans-serif;letter-spacing:-.1px}
.up{width:18px;height:12px;margin-right:18px}
.lang{width:31px;text-align:center;margin-right:22px}
.ti{width:20px;height:20px;margin-right:10px}
.bt{margin-right:16px}
.clock{width:80px;text-align:right;font-size:14.500px;letter-spacing:0}
.badge{width:20px;height:20px;margin-left:14px;border-radius:50%;background:#4cc2ff;color:#111;font-size:12px;line-height:20px;text-align:center}
```
